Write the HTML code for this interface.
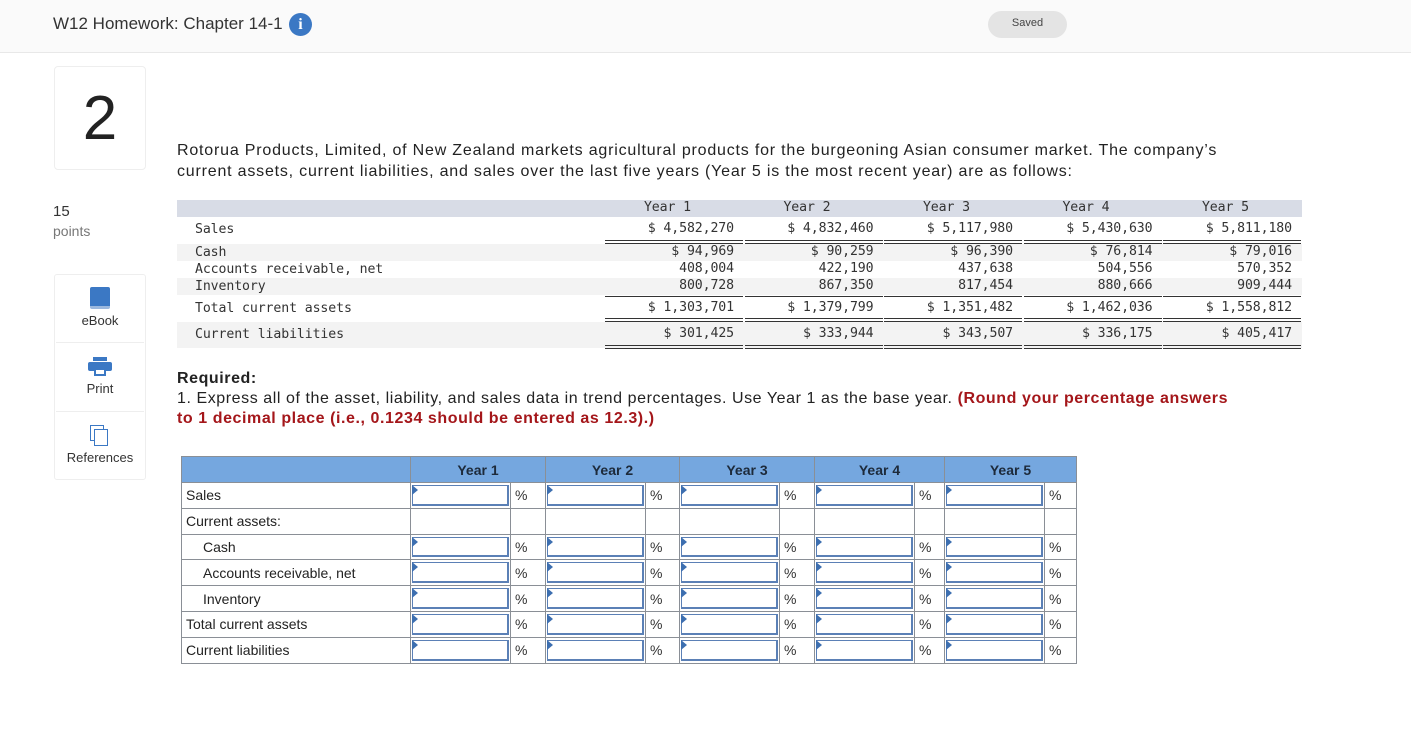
<!DOCTYPE html>
<html><head><style>
*{box-sizing:border-box;margin:0;padding:0}
body{width:1411px;height:754px;background:#fff;font-family:"Liberation Sans",sans-serif;color:#222;position:relative;overflow:hidden}
.a{position:absolute}
.top{left:0;top:0;width:1411px;height:53px;background:#fafafa;border-bottom:1px solid #e8e8e8}
.mono{font-family:"DejaVu Sans Mono","Liberation Mono",monospace;font-size:13.2px;color:#333;white-space:pre;letter-spacing:-0.1px}
.r{text-align:right}
.bg{background:#f3f3f3}
table{border-collapse:collapse}
td{border:1px solid #8a8f96;height:25.8px;font-size:14px;padding:0}
.lab{padding-left:4px}
.in{position:relative}
.in div{position:absolute;left:1px;top:2px;right:1px;bottom:2px;border:2px solid #5b80b6;border-top-width:1px;border-left-width:1px;background:#fff}
.in div:before{content:"";position:absolute;left:-1px;top:-1px;border-left:6px solid #3d6fb0;border-bottom:5px solid transparent;border-top:5px solid transparent}
.pc{padding-left:4px;color:#333}
th{background:#75a7df;border:1px solid #8a8f96;height:26px;font-size:14px;color:#1d2a3a}
</style></head><body>
<div class="a top"></div>
<div class="a" style="left:53px;top:14px;font-size:17px;color:#333">W12 Homework: Chapter 14-1</div>
<div class="a" style="left:289px;top:13px;width:23px;height:23px;border-radius:50%;background:#3b78c4;color:#fff;font:bold 16px 'Liberation Serif',serif;text-align:center;line-height:23px">i</div>
<div class="a" style="left:988px;top:11px;width:79px;height:27px;border-radius:14px;background:#e4e4e4;font-size:11px;color:#444;text-align:center;line-height:25px">Saved</div>

<div class="a" style="left:54px;top:66px;width:92px;height:104px;border:1px solid #eee;border-radius:4px;font-size:62px;text-align:center;line-height:104px;color:#222">2</div>
<div class="a" style="left:53px;top:203px;font-size:15px;color:#333">15</div>
<div class="a" style="left:53px;top:223px;font-size:14px;color:#777">points</div>

<div class="a" style="left:54px;top:274px;width:92px;height:206px;border:1px solid #eee;border-radius:3px"></div>
<div class="a" style="left:56px;top:342px;width:88px;height:1px;background:#eee"></div>
<div class="a" style="left:56px;top:411px;width:88px;height:1px;background:#eee"></div>
<div class="a" style="left:90px;top:287px;width:20px;height:22px;background:#3b78c4;border-radius:2px;border-bottom:3px solid #9bb8de"></div>
<div class="a" style="left:54px;top:313px;width:92px;text-align:center;font-size:13px;color:#333">eBook</div>
<div class="a" style="left:93px;top:357px;width:14px;height:4px;background:#3b78c4"></div>
<div class="a" style="left:88px;top:362px;width:24px;height:9px;background:#3b78c4;border-radius:2px"></div>
<div class="a" style="left:94px;top:368px;width:12px;height:8px;background:#fff;border:2px solid #3b78c4"></div>
<div class="a" style="left:54px;top:381px;width:92px;text-align:center;font-size:13px;color:#333">Print</div>
<div class="a" style="left:90px;top:425px;width:14px;height:16px;border:1.5px solid #3b78c4;background:#fff"></div>
<div class="a" style="left:94px;top:429px;width:14px;height:17px;border:1.5px solid #3b78c4;background:#fff"></div>
<div class="a" style="left:54px;top:450px;width:92px;text-align:center;font-size:13px;color:#333">References</div>

<div class="a" style="left:177px;top:140px;font-size:16px;line-height:21px;color:#222;white-space:nowrap;letter-spacing:0.8px">Rotorua Products, Limited, of New Zealand markets agricultural products for the burgeoning Asian consumer market. The company’s<br>current assets, current liabilities, and sales over the last five years (Year 5 is the most recent year) are as follows:</div>

<!-- data table -->
<div class="a" style="left:177px;top:200px;width:1125px;height:17px;background:#d8dce6"></div>
<div class="a bg" style="left:177px;top:244px;width:1125px;height:17px"></div>
<div class="a bg" style="left:177px;top:278px;width:1125px;height:17px"></div>
<div class="a bg" style="left:177px;top:322px;width:1125px;height:26px"></div>
<div class="a mono" style="left:195px;top:222px">Sales</div>
<div class="a mono" style="left:195px;top:245px">Cash</div>
<div class="a mono" style="left:195px;top:262px">Accounts receivable, net</div>
<div class="a mono" style="left:195px;top:279px">Inventory</div>
<div class="a mono" style="left:195px;top:301px">Total current assets</div>
<div class="a mono" style="left:195px;top:327px">Current liabilities</div>
<div id="cols"></div>

<div class="a" style="left:177px;top:369px;font-size:16px;line-height:20px;white-space:nowrap;letter-spacing:0.57px"><b>Required:</b><br>1. Express all of the asset, liability, and sales data in trend percentages. Use Year 1 as the base year. <b style="color:#a4161a">(Round your percentage answers</b><br><b style="color:#a4161a">to 1 decimal place (i.e., 0.1234 should be entered as 12.3).)</b></div>

<table class="a" style="left:181px;top:456px;width:896px">
<tr><th style="width:229px"></th><th colspan="2" style="width:135px">Year 1</th><th colspan="2" style="width:134px">Year 2</th><th colspan="2" style="width:135px">Year 3</th><th colspan="2" style="width:130px">Year 4</th><th colspan="2" style="width:132px">Year 5</th></tr>
<tbody id="rows"></tbody>
</table>
<script>
var yrs=[["Year 1","$ 4,582,270","$ 94,969","408,004","800,728","$ 1,303,701","$ 301,425"],
["Year 2","$ 4,832,460","$ 90,259","422,190","867,350","$ 1,379,799","$ 333,944"],
["Year 3","$ 5,117,980","$ 96,390","437,638","817,454","$ 1,351,482","$ 343,507"],
["Year 4","$ 5,430,630","$ 76,814","504,556","880,666","$ 1,462,036","$ 336,175"],
["Year 5","$ 5,811,180","$ 79,016","570,352","909,444","$ 1,558,812","$ 405,417"]];
var tops=[200,221,244,261,278,300,326],h="";
yrs.forEach(function(y,i){var L=605+i*139.5;
h+='<div class="a mono" style="left:'+L+'px;top:200px;width:125px;text-align:center">'+y[0]+'</div>';
for(var k=1;k<7;k++)h+='<div class="a mono r" style="left:'+(L-10)+'px;top:'+tops[k]+'px;width:139px">'+y[k]+'</div>';
var W=138;
h+='<div class="a" style="left:'+L+'px;top:240px;width:'+W+'px;height:4px;border-top:1px solid #333;border-bottom:1px solid #333"></div>';
h+='<div class="a" style="left:'+L+'px;top:296px;width:'+W+'px;height:1px;background:#333"></div>';
h+='<div class="a" style="left:'+L+'px;top:318px;width:'+W+'px;height:4px;border-top:1px solid #333;border-bottom:1px solid #333"></div>';
h+='<div class="a" style="left:'+L+'px;top:345px;width:'+W+'px;height:4px;border-top:1px solid #333;border-bottom:1px solid #333"></div>';});
document.getElementById("cols").innerHTML=h;
var labs=[["Sales",0],["Current assets:",0,1],["Cash",1],["Accounts receivable, net",1],["Inventory",1],["Total current assets",0],["Current liabilities",0]];
var iw=[100,100,100,100,100],pw=[35,34,35,30,32],r="";
labs.forEach(function(l){r+='<tr><td class="lab" style="padding-left:'+(l[1]?21:4)+'px">'+l[0]+'</td>';
for(var j=0;j<5;j++){ if(l[2]) r+='<td></td><td></td>'; else r+='<td class="in" style="width:'+iw[j]+'px"><div></div></td><td class="pc" style="width:'+pw[j]+'px">%</td>';}
r+='</tr>';});
document.getElementById("rows").innerHTML=r;
</script>
</body></html>
